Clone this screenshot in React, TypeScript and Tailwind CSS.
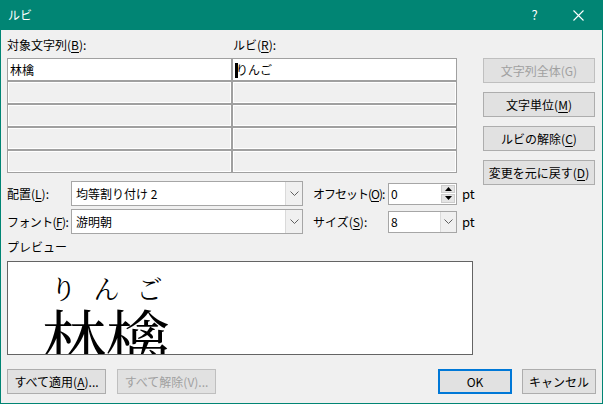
import React from "react";

const ui = { fontFamily: '"Noto Sans CJK JP", "Noto Sans", sans-serif' };

function Key({ k }: { k: string }) {
  return <span className="underline underline-offset-2">{k}</span>;
}

function Chevron() {
  return (
    <svg width="9" height="5" viewBox="0 0 9 5" fill="none">
      <path d="M0.5 0.5 L4.5 4.5 L8.5 0.5" stroke="#606060" strokeWidth="1" />
    </svg>
  );
}

function Button({
  children,
  disabled,
  primary,
  className = "",
}: {
  children: React.ReactNode;
  disabled?: boolean;
  primary?: boolean;
  className?: string;
}) {
  return (
    <div
      className={
        "h-[25px] flex items-center justify-center whitespace-nowrap text-[12px] leading-[14px] " +
        (primary
          ? "border-2 border-[#0078d7] bg-[#e1e1e1] text-black "
          : disabled
          ? "border border-[#bfbfbf] bg-[#e1e1e1] text-[#a0a0a0] "
          : "border border-[#adadad] bg-[#e1e1e1] text-black ") +
        className
      }
    >
      {children}
    </div>
  );
}

function Combo({ value }: { value: string }) {
  return (
    <div className="w-[232px] h-[25px] shrink-0 border border-[#a6a6a6] bg-white flex">
      <div className="flex-1 flex items-center pl-[4px] text-[12px] leading-[14px]">{value}</div>
      <div className="w-[17px] bg-[#f0f0f0] border-l border-[#dadada] flex items-center justify-center">
        <Chevron />
      </div>
    </div>
  );
}

function Cell({ children, white }: { children?: React.ReactNode; white?: boolean }) {
  return (
    <div
      className={
        "relative flex items-center text-[12px] leading-[14px] " +
        (white ? "bg-white pl-[2px]" : "bg-[#f0f0f0] border border-white")
      }
    >
      {children}
    </div>
  );
}

export default function App() {
  return (
    <div
      className="w-[603px] h-[404px] bg-[#f0f0f0] border border-t-0 border-[#018574] flex flex-col text-black"
      style={ui}
    >
      {/* title bar */}
      <div className="h-[30px] bg-[#018574] flex items-center text-white text-[12px] shrink-0">
        <div className="pl-[7px] flex-1">ルビ</div>
        <div className="w-[46px] pl-[5px] text-center text-[13px]">?</div>
        <div className="w-[46px] mr-[1px] flex items-center justify-center">
          <svg width="11" height="11" viewBox="0 0 11 11">
            <path d="M0.5 0.5 L10.5 10.5 M10.5 0.5 L0.5 10.5" stroke="white" strokeWidth="1.1" />
          </svg>
        </div>
      </div>

      <div className="flex-1 px-[6px] pt-[8px] flex flex-col">
        <div className="flex">
          {/* left column */}
          <div className="w-[466px] flex flex-col">
            <div className="h-[14px] flex text-[12px] leading-[14px]">
              <div className="w-[226px]">
                対象文字列(<Key k="B" />):
              </div>
              <div>
                ルビ(<Key k="R" />):
              </div>
            </div>

            <div className="mt-[6px] w-[450px] h-[115px] bg-[#a0a0a0] p-[1px] grid grid-cols-2 grid-rows-5 gap-[2px]">
              <Cell white>林檎</Cell>
              <Cell white>
                <span className="pl-[1px]">りんご</span>
                <span className="absolute left-[2px] top-[4px] w-[3px] h-[15px] bg-black" />
              </Cell>
              <Cell />
              <Cell />
              <Cell />
              <Cell />
              <Cell />
              <Cell />
              <Cell />
              <Cell />
            </div>

            <div className="mt-[8px] h-[25px] flex items-center text-[12px] leading-[14px] whitespace-nowrap">
              <div className="w-[64px] shrink-0">
                配置(<Key k="L" />):
              </div>
              <Combo value="均等割り付け 2" />
              <div className="ml-[10px] w-[75px] shrink-0 tracking-[-1px]">
                オフセット(<Key k="O" />):
              </div>
              <div className="w-[69px] h-[22px] shrink-0 border border-[#a6a6a6] bg-white flex">
                <div className="flex-1 flex items-center pl-[2px]">0</div>
                <div className="w-[15px] flex flex-col gap-[1px] p-[1px] pl-0">
                  <div className="flex-1 bg-[#e5e5e5] border border-[#cdcdcd] flex items-center justify-center">
                    <svg width="7" height="4" viewBox="0 0 7 4">
                      <path d="M0 4 L3.5 0 L7 4 Z" fill="#000" />
                    </svg>
                  </div>
                  <div className="flex-1 bg-[#e5e5e5] border border-[#cdcdcd] flex items-center justify-center">
                    <svg width="7" height="4" viewBox="0 0 7 4">
                      <path d="M0 0 L7 0 L3.5 4 Z" fill="#000" />
                    </svg>
                  </div>
                </div>
              </div>
              <div className="ml-[5px] text-[13px]">pt</div>
            </div>

            <div className="mt-[3px] h-[25px] flex items-center text-[12px] leading-[14px] whitespace-nowrap">
              <div className="w-[64px] shrink-0 tracking-[-0.6px]">
                フォント(<Key k="F" />):
              </div>
              <Combo value="游明朝" />
              <div className="ml-[10px] w-[75px] shrink-0">
                サイズ(<Key k="S" />):
              </div>
              <div className="w-[69px] h-[22px] shrink-0 border border-[#a6a6a6] bg-white flex">
                <div className="flex-1 flex items-center pl-[2px]">8</div>
                <div className="w-[16px] bg-[#f0f0f0] border-l border-[#dadada] flex items-center justify-center">
                  <Chevron />
                </div>
              </div>
              <div className="ml-[5px] text-[13px]">pt</div>
            </div>

            <div className="mt-[6px] h-[14px] text-[12px] leading-[14px]">プレビュー</div>

            <div className="mt-[7px] w-[466px] h-[94px] bg-white border border-[#646464] overflow-hidden">
              <div
                className="pl-[34px]"
                style={{ fontFamily: '"Noto Serif CJK JP", "Noto Sans CJK JP", serif' }}
              >
                <div className="mt-[13px] flex text-[26px] leading-[26px]">
                  <span className="w-[43px] text-center">り</span>
                  <span className="w-[43px] text-center">ん</span>
                  <span className="w-[43px] text-center">ご</span>
                </div>
                <div className="mt-[2px] text-[64px] leading-[64px] whitespace-nowrap">林檎</div>
              </div>
            </div>
          </div>

          {/* right column */}
          <div className="ml-[10px] w-[112px] pt-[20px] flex flex-col gap-[9px]">
            <Button disabled>文字列全体(G)</Button>
            <Button>
              文字単位(<Key k="M" />)
            </Button>
            <Button>
              ルビの解除(<Key k="C" />)
            </Button>
            <Button>
              変更を元に戻す(<Key k="D" />)
            </Button>
          </div>
        </div>

        <div className="mt-[14px] flex">
          <Button className="w-[99px]">
            すべて適用(<Key k="A" />)...
          </Button>
          <Button disabled className="ml-[11px] w-[99px]">
            すべて解除(V)...
          </Button>
          <div className="flex-1" />
          <Button primary className="w-[74px]">
            OK
          </Button>
          <Button className="ml-[10px] w-[74px]">キャンセル</Button>
        </div>
      </div>
    </div>
  );
}
